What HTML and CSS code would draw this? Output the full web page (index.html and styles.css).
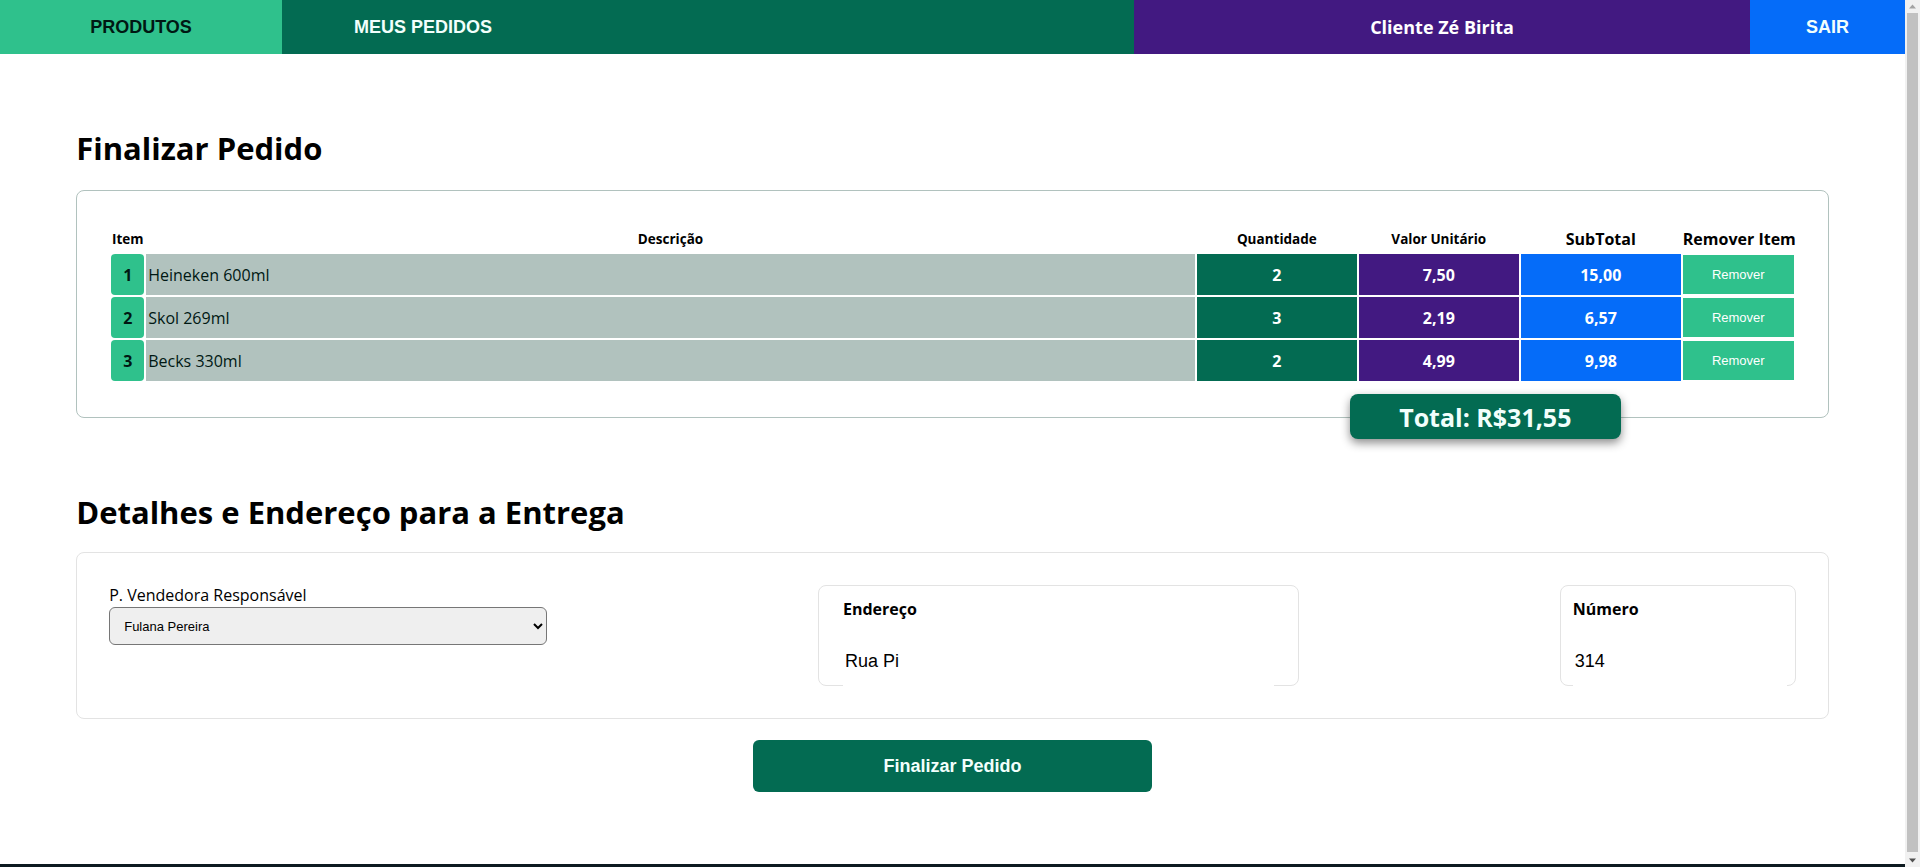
FILE: index.html
```html
<!DOCTYPE html>
<html lang="pt-BR">
<head>
<meta charset="utf-8">
<title>Finalizar Pedido</title>
<link rel="stylesheet" href="styles.css">
</head>
<body>
<div class="page">
  <nav class="topbar">
    <a class="nav-item nav-produtos" href="#">PRODUTOS</a>
    <a class="nav-item nav-pedidos" href="#">MEUS PEDIDOS</a>
    <div class="nav-spacer"></div>
    <div class="nav-item nav-cliente">Cliente Zé Birita</div>
    <a class="nav-item nav-sair" href="#">SAIR</a>
  </nav>

  <main class="container">
    <h1 class="section-title first">Finalizar Pedido</h1>
    <section class="card order-card">
      <table class="order-table">
        <colgroup>
          <col class="c-item"><col><col class="c-num"><col class="c-num"><col class="c-num"><col class="c-rem">
        </colgroup>
        <thead>
          <tr>
            <th class="th-small">Item</th>
            <th class="th-small">Descrição</th>
            <th class="th-small">Quantidade</th>
            <th class="th-small">Valor Unitário</th>
            <th class="th-big">SubTotal</th>
            <th class="th-big">Remover Item</th>
          </tr>
        </thead>
        <tbody>
          <tr>
            <td class="td-item">1</td>
            <td class="td-desc">Heineken 600ml</td>
            <td class="td-qty">2</td>
            <td class="td-unit">7,50</td>
            <td class="td-sub">15,00</td>
            <td class="td-rem"><button class="btn-remove">Remover</button></td>
          </tr>
          <tr>
            <td class="td-item">2</td>
            <td class="td-desc">Skol 269ml</td>
            <td class="td-qty">3</td>
            <td class="td-unit">2,19</td>
            <td class="td-sub">6,57</td>
            <td class="td-rem"><button class="btn-remove">Remover</button></td>
          </tr>
          <tr>
            <td class="td-item">3</td>
            <td class="td-desc">Becks 330ml</td>
            <td class="td-qty">2</td>
            <td class="td-unit">4,99</td>
            <td class="td-sub">9,98</td>
            <td class="td-rem"><button class="btn-remove">Remover</button></td>
          </tr>
        </tbody>
      </table>
      <div class="total-badge">Total: R$31,55</div>
    </section>

    <h2 class="section-title second">Detalhes e Endereço para a Entrega</h2>
    <section class="card details-card">
      <div class="seller-group">
        <label class="seller-label" for="seller">P. Vendedora Responsável</label>
        <select id="seller" class="seller-select">
          <option>Fulana Pereira</option>
        </select>
      </div>
      <div class="field-box field-address">
        <label class="field-label" for="addr">Endereço</label>
        <input id="addr" class="field-input" type="text" value="Rua Pi">
      </div>
      <div class="field-box field-number">
        <label class="field-label" for="num">Número</label>
        <input id="num" class="field-input" type="text" value="314">
      </div>
    </section>

    <button class="btn-finish">Finalizar Pedido</button>
  </main>
  <footer class="footer"></footer>
</div>
<aside class="scrollbar" aria-hidden="true">
  <svg class="sb-arrow" width="15" height="13" viewBox="0 0 15 13"><path d="M4 8.5 L7.5 4.5 L11 8.5 Z" fill="#a3a3a3"/></svg>
  <div class="sb-thumb"></div>
  <svg class="sb-arrow" width="15" height="13" viewBox="0 0 15 13"><path d="M4 4.5 L7.5 8.5 L11 4.5 Z" fill="#505050"/></svg>
</aside>
</body>
</html>
```

FILE: styles.css
```css
* { box-sizing: border-box; }

body {
  margin: 0;
  display: grid;
  grid-template-columns: 1fr 15px;
  align-items: start;
  font-family: "Open Sans", "Noto Sans", sans-serif;
  color: #000;
  background: #fff;
}

.page {
  min-width: 0;
}

.scrollbar {
  position: sticky;
  top: 0;
  height: 100vh;
  display: flex;
  flex-direction: column;
  align-items: center;
  background: #f1f1f1;
}

.sb-arrow {
  display: block;
  flex: none;
}

.sb-thumb {
  flex: 1;
  width: 11px;
  margin: 0 0 2px;
  background: #c1c1c1;
}

.topbar {
  display: flex;
  height: 54px;
}

.nav-item {
  display: flex;
  align-items: center;
  justify-content: center;
  text-decoration: none;
  font-weight: 700;
  font-size: 18px;
}

.nav-produtos {
  width: 282px;
  background: #2fc18c;
  color: #001813;
  font-family: "Liberation Sans", Arial, sans-serif;
}

.nav-pedidos {
  width: 282px;
  background: #036b52;
  color: #f2fffc;
  font-family: "Liberation Sans", Arial, sans-serif;
}

.nav-spacer {
  flex: 1;
  background: #036b52;
}

.nav-cliente {
  width: 616px;
  background: #421981;
  color: #fff;
}

.nav-sair {
  width: 155px;
  background: #056cf9;
  color: #f2fffc;
  font-family: "Liberation Sans", Arial, sans-serif;
}

.container {
  width: 92%;
  margin: 0 auto;
}

.section-title {
  font-size: 31px;
  font-weight: 700;
  line-height: 40px;
  margin: 0;
}

.section-title.first { margin: 74px 0 22px; }
.section-title.second { margin: 74px 0 20px; }

.card {
  border-radius: 8px;
}

.order-card {
  position: relative;
  border: 1px solid #b1c2be;
  padding: 32px 32px 34px;
}

.order-table {
  width: 100%;
  table-layout: fixed;
  border-collapse: separate;
  border-spacing: 2px;
}

.c-item { width: 33px; }
.c-num { width: 160px; }
.c-rem { width: 111px; }

.order-table th {
  height: 27px;
  padding: 0;
  font-weight: 700;
  text-align: center;
  vertical-align: middle;
  white-space: nowrap;
}

.th-small { font-size: 13.5px; }
.th-big { font-size: 16px; }

.order-table td {
  height: 41px;
  padding: 0;
  font-size: 16px;
  vertical-align: middle;
}

.td-item {
  background: #2fc18c;
  border-radius: 4px;
  font-weight: 700;
  text-align: center;
  color: #001813;
}

.td-desc {
  background: #b1c2be;
  padding-left: 2px !important;
  color: #001813;
}

.td-qty, .td-unit, .td-sub {
  color: #fff;
  font-weight: 700;
  text-align: center;
}

.td-qty { background: #036b52; }
.td-unit { background: #421981; }
.td-sub { background: #056cf9; }

.btn-remove {
  display: block;
  width: 100%;
  height: 39px;
  border: none;
  background: #2fc18c;
  color: #fff;
  font-family: "Liberation Sans", Arial, sans-serif;
  font-size: 13px;
  cursor: pointer;
}

.total-badge {
  position: absolute;
  right: 207px;
  bottom: -22px;
  width: 271px;
  height: 45px;
  display: flex;
  align-items: center;
  justify-content: center;
  background: #036b52;
  color: #f2fffc;
  font-size: 25px;
  font-weight: 700;
  border-radius: 8px;
  box-shadow: 0 4px 10px rgba(0, 0, 0, 0.45);
}

.details-card {
  display: flex;
  justify-content: space-between;
  align-items: flex-start;
  border: 1px solid #e3e3e3;
  padding: 32px;
}

.seller-group {
  display: flex;
  flex-direction: column;
  width: 448px;
}

.seller-label {
  font-size: 16px;
  line-height: 20px;
}

.seller-select {
  margin-top: 2px;
  width: 438px;
  height: 38px;
  padding: 0 8px 0 10px;
  background: #efefef;
  border: 1px solid #767676;
  border-radius: 6px;
  font-family: "Liberation Sans", Arial, sans-serif;
  font-size: 13px;
  color: #000;
}

.field-box {
  display: flex;
  flex-direction: column;
  border: 1px solid #e3e3e3;
  border-radius: 8px;
}

.field-address {
  width: 481px;
  padding: 12px 24px 0;
}

.field-number {
  width: 236px;
  padding: 12px 8px 0 12px;
}

.field-label {
  font-size: 16px;
  font-weight: 700;
  line-height: 22px;
  margin-bottom: 18px;
}

.field-input {
  display: block;
  width: 100%;
  height: 48px;
  margin-bottom: -1px;
  padding: 0 0 2px 2px;
  border: none;
  outline: none;
  background: #fff;
  font-family: "Liberation Sans", Arial, sans-serif;
  font-size: 18px;
  color: #000;
}

.btn-finish {
  display: block;
  width: 399px;
  height: 52px;
  margin: 21px auto 0;
  border: none;
  border-radius: 6px;
  background: #036b52;
  color: #f2fffc;
  font-family: "Liberation Sans", Arial, sans-serif;
  font-size: 18px;
  font-weight: 700;
  cursor: pointer;
}

.footer {
  margin-top: 72px;
  height: 40px;
  background: #0d1a20;
}
```
